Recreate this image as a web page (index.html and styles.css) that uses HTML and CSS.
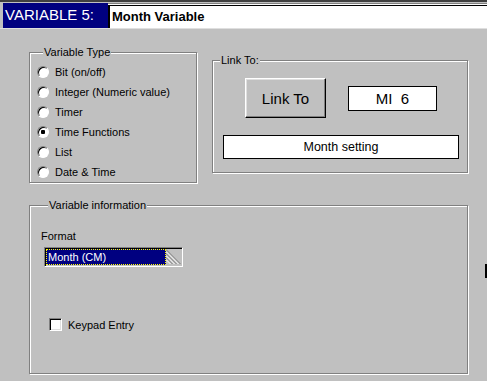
FILE: index.html
```html
<!DOCTYPE html>
<html lang="en">

<head>
  <meta charset="UTF-8">
  <title>Variable 5</title>
  <link rel="stylesheet" href="styles.css">
</head>

<body>
  <div class="titlebar">
    <div class="var-label">VARIABLE 5:</div>
    <div class="var-name">Month Variable</div>
  </div>

  <div class="panel">
    <div class="top-row">
      <fieldset class="group type-group">
        <legend>Variable Type</legend>
        <div class="option"><span class="radio"></span>Bit (on/off)</div>
        <div class="option"><span class="radio"></span>Integer (Numeric value)</div>
        <div class="option"><span class="radio"></span>Timer</div>
        <div class="option"><span class="radio checked"></span>Time Functions</div>
        <div class="option"><span class="radio"></span>List</div>
        <div class="option"><span class="radio"></span>Date &amp; Time</div>
      </fieldset>

      <fieldset class="group link-group">
        <legend>Link To:</legend>
        <div class="link-row">
          <button class="link-btn">Link To</button>
          <div class="link-value">MI  6</div>
        </div>
        <div class="link-desc">Month setting</div>
      </fieldset>
    </div>

    <div class="bottom-row">
      <fieldset class="group info-group">
        <legend>Variable information</legend>
        <div class="field-label">Format</div>
        <div class="combo">
          <div class="combo-sel">Month (CM)</div>
          <div class="combo-grip">
            <svg width="15" height="16" viewBox="0 0 15 16">
              <line x1="0" y1="0.5" x2="14.5" y2="15" stroke="#808080" />
              <line x1="0" y1="2.5" x2="12.5" y2="15" stroke="#fff" />
              <line x1="0" y1="4.5" x2="10.5" y2="15" stroke="#808080" />
              <line x1="0" y1="6.5" x2="8.5" y2="15" stroke="#fff" />
              <line x1="0" y1="8.5" x2="6.5" y2="15" stroke="#808080" />
              <line x1="0" y1="10.5" x2="4.5" y2="15" stroke="#fff" />
            </svg>
          </div>
        </div>
        <div class="check-row"><span class="checkbox"></span>Keypad Entry</div>
      </fieldset>
      <div class="edge-btn"></div>
    </div>
  </div>
</body>

</html>
```

FILE: styles.css
```css
html {
  overflow: hidden;
}

body {
  margin: 0;
  width: 487px;
  height: 381px;
  overflow: hidden;
  background-color: #c0c0c0;
  font-family: "Liberation Sans", Arial, sans-serif;
  font-size: 11px;
  color: #000;
}

/* title strip */
.titlebar {
  display: flex;
  height: 25px;
  padding-top: 1px;
  border-top: 2px solid #404040;
  border-bottom: 1px solid #dfdfdf;
}

.var-label {
  width: 105px;
  margin-left: 3px;
  padding-left: 2px;
  box-sizing: border-box;
  background-color: #000080;
  color: #fff;
  font-size: 15px;
  line-height: 23px;
}

.var-name {
  flex: 1;
  margin-top: 2px;
  padding-left: 2px;
  background-color: #fff;
  border-top: 1px solid #000;
  border-left: 2px solid #000;
  box-shadow: 0 -1px #fff, 0 -2px #808080;
  font-size: 13px;
  font-weight: bold;
  line-height: 22px;
}

/* group boxes */
.group {
  margin: 0;
  padding: 0;
  min-width: 0;
  flex: none;
  box-sizing: border-box;
  border: 1px solid #808080;
  box-shadow: inset 1px 1px #fff, 1px 1px #fff;
}

.group legend {
  margin-left: 6px;
  padding: 0 1px;
  background-color: #c0c0c0;
  font-size: 11px;
  line-height: 13px;
}

.top-row {
  display: flex;
  align-items: flex-start;
}

.type-group {
  width: 168px;
  margin-top: 17px;
  margin-left: 29px;
  padding: 3px 0 0 7px;
}

.option {
  display: flex;
  align-items: center;
  height: 20px;
}

.radio {
  width: 12px;
  height: 12px;
  margin-right: 6px;
  box-sizing: border-box;
  border-radius: 50%;
  border: 1px solid;
  border-color: #808080 #fff #fff #808080;
  box-shadow: inset 1px 1px #000;
  background-color: #fff;
}

.radio.checked {
  background: radial-gradient(circle, #000 2px, #fff 2.5px);
}

.link-group {
  width: 256px;
  margin-top: 25px;
  margin-left: 15px;
  padding: 11px 0 13px 0;
}

.link-group legend {
  margin-left: 7px;
}

.link-row {
  display: flex;
  align-items: center;
  gap: 22px;
  padding-left: 32px;
}

.link-btn {
  width: 81px;
  height: 40px;
  padding: 0;
  background-color: #c0c0c0;
  border: 1px solid;
  border-color: #fff #000 #000 #fff;
  box-shadow: inset -1px -1px #808080, inset 1px 1px #dfdfdf;
  font-family: "Liberation Sans", Arial, sans-serif;
  font-size: 15px;
  color: #000;
}

.link-value {
  width: 89px;
  height: 25px;
  box-sizing: border-box;
  border: 1px solid #000;
  background-color: #fff;
  font-size: 15px;
  line-height: 23px;
  text-align: center;
  white-space: pre;
}

.link-desc {
  width: 236px;
  height: 24px;
  margin: 17px 0 0 10px;
  box-sizing: border-box;
  border: 1px solid #000;
  background-color: #fff;
  font-size: 12.5px;
  line-height: 22px;
  text-align: center;
}

/* variable information */
.bottom-row {
  display: flex;
  align-items: flex-start;
  margin-top: 16px;
}

.info-group {
  width: 439px;
  margin-left: 29px;
  padding: 18px 0 42px 11px;
}

.info-group legend {
  margin-left: 7px;
}

.field-label {
  line-height: 13px;
}

.combo {
  display: flex;
  width: 139px;
  height: 20px;
  margin: 4px 0 0 3px;
  box-sizing: border-box;
  border: 1px solid;
  border-color: #808080 #fff #fff #808080;
  box-shadow: inset 1px 1px #000;
  padding: 1px 1px 1px 1px;
}

.combo-sel {
  width: 121px;
  box-sizing: border-box;
  background-color: #000080;
  border: 1px dotted #ffff00;
  color: #fff;
  line-height: 14px;
  padding-left: 1px;
}

.combo-grip {
  flex: 1;
  display: flex;
  align-items: flex-end;
}

.check-row {
  display: flex;
  align-items: center;
  height: 13px;
  margin: 51px 0 0 8px;
}

.checkbox {
  width: 13px;
  height: 13px;
  margin-right: 6px;
  box-sizing: border-box;
  border: 1px solid;
  border-color: #808080 #fff #fff #808080;
  box-shadow: inset 1px 1px #000, inset -1px -1px #dfdfdf;
  background-color: #fff;
}

.edge-btn {
  flex: none;
  width: 20px;
  height: 12px;
  margin: 65px 0 0 17px;
  border: 1px solid #000;
  border-left-width: 2px;
}
```
